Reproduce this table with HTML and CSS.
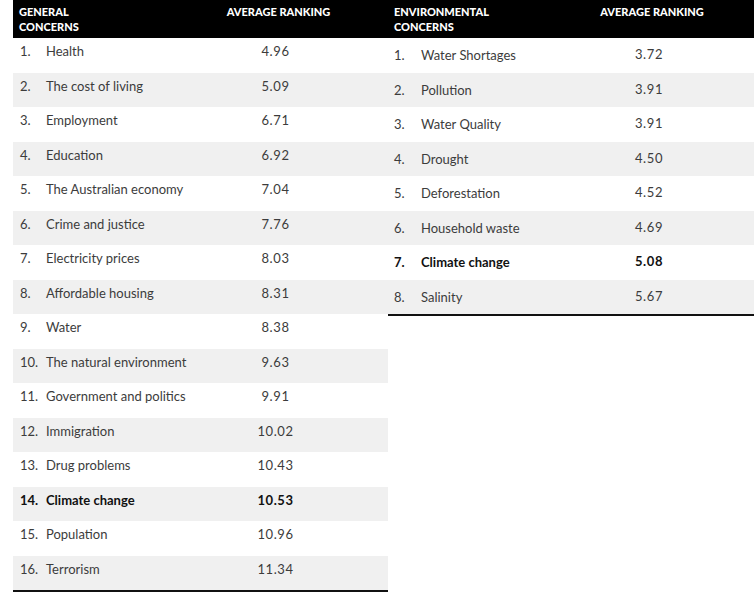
FILE: index.html
```html
<!DOCTYPE html>
<html>
<head>
<meta charset="utf-8">
<link rel="stylesheet" href="styles.css">
</head>
<body>
<div class="page">
  <div class="tbl tbl-left">
    <div class="head">
      <div class="h-label">GENERAL<br>CONCERNS</div>
      <div class="h-val">AVERAGE RANKING</div>
    </div>
    <div class="row"><span class="num">1.</span><span class="lbl">Health</span><span class="val">4.96</span></div>
    <div class="row"><span class="num">2.</span><span class="lbl">The cost of living</span><span class="val">5.09</span></div>
    <div class="row"><span class="num">3.</span><span class="lbl">Employment</span><span class="val">6.71</span></div>
    <div class="row"><span class="num">4.</span><span class="lbl">Education</span><span class="val">6.92</span></div>
    <div class="row"><span class="num">5.</span><span class="lbl">The Australian economy</span><span class="val">7.04</span></div>
    <div class="row"><span class="num">6.</span><span class="lbl">Crime and justice</span><span class="val">7.76</span></div>
    <div class="row"><span class="num">7.</span><span class="lbl">Electricity prices</span><span class="val">8.03</span></div>
    <div class="row"><span class="num">8.</span><span class="lbl">Affordable housing</span><span class="val">8.31</span></div>
    <div class="row"><span class="num">9.</span><span class="lbl">Water</span><span class="val">8.38</span></div>
    <div class="row"><span class="num">10.</span><span class="lbl">The natural environment</span><span class="val">9.63</span></div>
    <div class="row"><span class="num">11.</span><span class="lbl">Government and politics</span><span class="val">9.91</span></div>
    <div class="row"><span class="num">12.</span><span class="lbl">Immigration</span><span class="val">10.02</span></div>
    <div class="row"><span class="num">13.</span><span class="lbl">Drug problems</span><span class="val">10.43</span></div>
    <div class="row bold"><span class="num">14.</span><span class="lbl">Climate change</span><span class="val">10.53</span></div>
    <div class="row"><span class="num">15.</span><span class="lbl">Population</span><span class="val">10.96</span></div>
    <div class="row"><span class="num">16.</span><span class="lbl">Terrorism</span><span class="val">11.34</span></div>
  </div>
  <div class="tbl tbl-right">
    <div class="head">
      <div class="h-label">ENVIRONMENTAL<br>CONCERNS</div>
      <div class="h-val">AVERAGE RANKING</div>
    </div>
    <div class="row"><span class="num">1.</span><span class="lbl">Water Shortages</span><span class="val">3.72</span></div>
    <div class="row"><span class="num">2.</span><span class="lbl">Pollution</span><span class="val">3.91</span></div>
    <div class="row"><span class="num">3.</span><span class="lbl">Water Quality</span><span class="val">3.91</span></div>
    <div class="row"><span class="num">4.</span><span class="lbl">Drought</span><span class="val">4.50</span></div>
    <div class="row"><span class="num">5.</span><span class="lbl">Deforestation</span><span class="val">4.52</span></div>
    <div class="row"><span class="num">6.</span><span class="lbl">Household waste</span><span class="val">4.69</span></div>
    <div class="row bold"><span class="num">7.</span><span class="lbl">Climate change</span><span class="val">5.08</span></div>
    <div class="row"><span class="num">8.</span><span class="lbl">Salinity</span><span class="val">5.67</span></div>
  </div>
</div>
</body>
</html>
```

FILE: styles.css
```css
html, body {
  margin: 0;
  padding: 0;
  background: #ffffff;
}

body {
  font-family: Lato, "Liberation Sans", sans-serif;
  color: #3c3c3c;
}

.page {
  display: flex;
  align-items: flex-start;
  padding-left: 13px;
  width: 741px;
}

.tbl {
  display: flex;
  flex-direction: column;
  border-bottom: 2px solid #111;
}

.tbl-left {
  width: 375px;
}

.tbl-right {
  width: 366px;
}

.head {
  height: 38px;
  background: #000;
  color: #fff;
  display: grid;
  font-weight: 900;
  font-size: 11px;
  line-height: 15px;
  box-sizing: border-box;
  padding-top: 4px;
  padding-left: 6px;
}

.tbl-left .head {
  grid-template-columns: 150px 225px;
}

.tbl-right .head {
  grid-template-columns: 156px 210px;
}

.head .h-val {
  text-align: center;
  margin-left: -6px;
}

.row {
  height: 34.5px;
  display: grid;
  align-items: start;
  font-size: 13px;
  box-sizing: border-box;
}

.row:nth-child(odd) {
  background: #f0f0f0;
}

.tbl-left .row {
  grid-template-columns: 33px 117px 225px;
  padding-top: 5px;
}

.tbl-right .row {
  grid-template-columns: 33px 123px 210px;
  padding-top: 9px;
}

.num {
  padding-left: 7px;
  white-space: nowrap;
}

.tbl-right .num {
  padding-left: 6px;
}

.lbl {
  white-space: nowrap;
}

.val {
  text-align: center;
  letter-spacing: 0.6px;
}

.tbl-right .val {
  margin-top: -1px;
}

.row.bold {
  font-weight: 700;
  color: #111;
}
```
